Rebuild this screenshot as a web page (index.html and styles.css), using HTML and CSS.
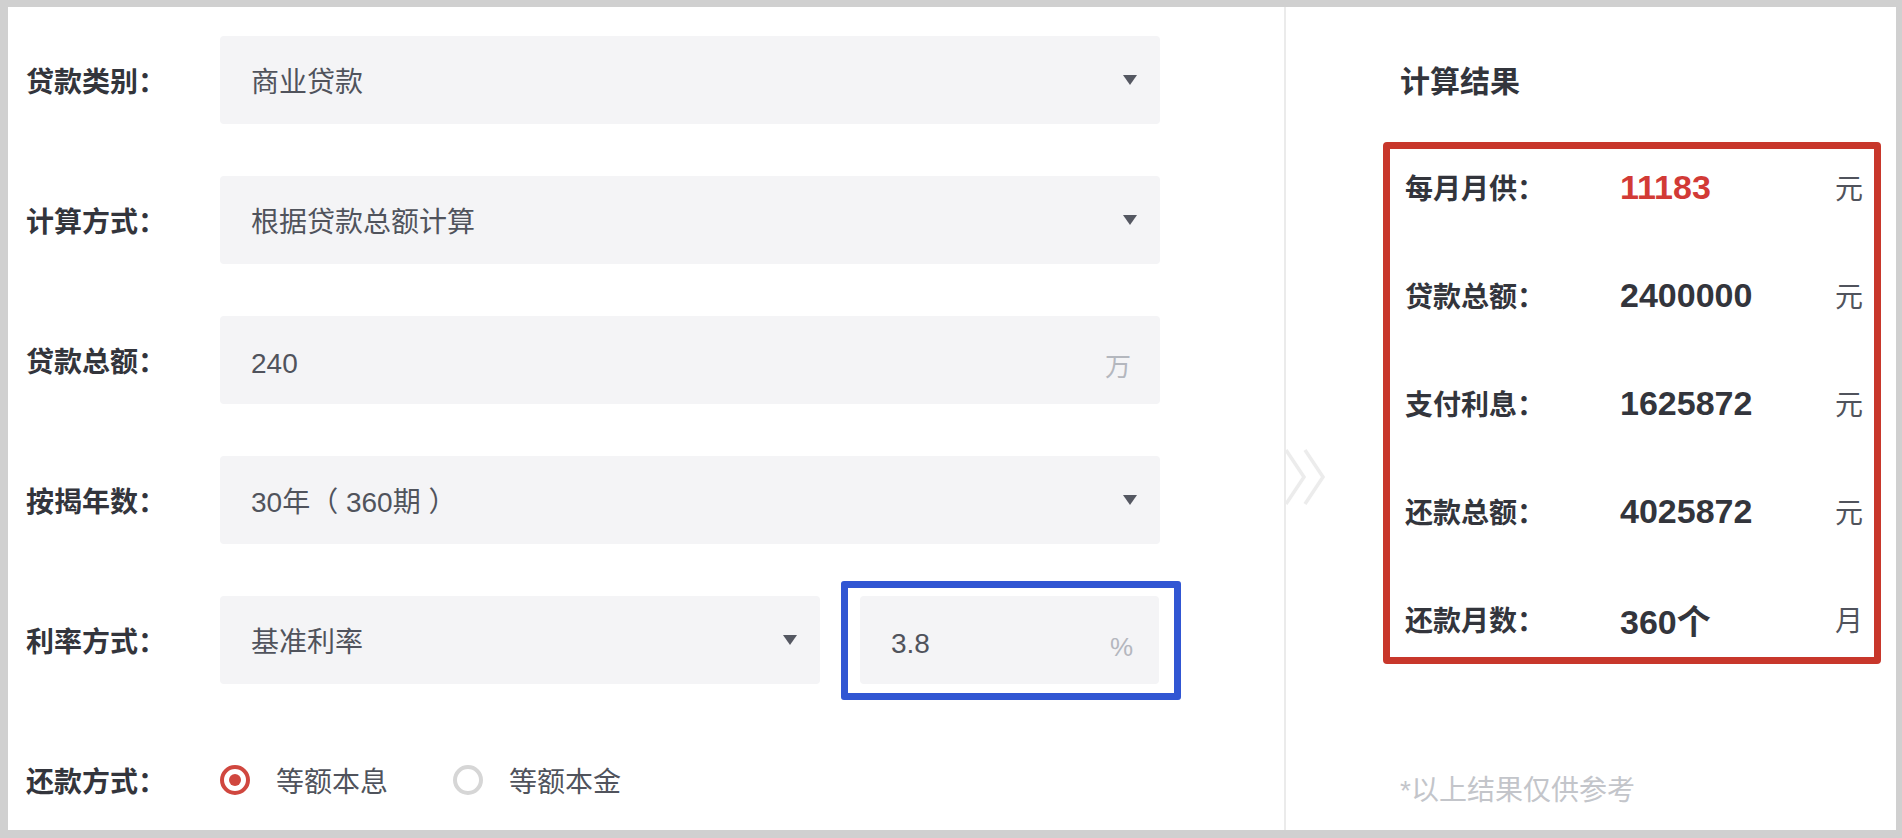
FILE: index.html
```html
<!DOCTYPE html>
<html lang="zh-CN">
<head>
    <meta charset="UTF-8">
    <meta name="viewport" content="width=device-width, initial-scale=1.0">
    <title>房贷计算器</title>
    <link rel="stylesheet" href="styles.css">
</head>
<body>
    <div class="calculator">
        <div class="form-panel">
            <div class="form-row">
                <label class="form-label">贷款类别：</label>
                <div class="field select-field">
                    <span class="field-value">商业贷款</span>
                    <i class="arrow"></i>
                </div>
            </div>

            <div class="form-row">
                <label class="form-label">计算方式：</label>
                <div class="field select-field">
                    <span class="field-value">根据贷款总额计算</span>
                    <i class="arrow"></i>
                </div>
            </div>

            <div class="form-row">
                <label class="form-label">贷款总额：</label>
                <div class="field input-field">
                    <span class="field-value">240</span>
                    <span class="field-unit">万</span>
                </div>
            </div>

            <div class="form-row">
                <label class="form-label">按揭年数：</label>
                <div class="field select-field">
                    <span class="field-value">30年（ 360期 ）</span>
                    <i class="arrow"></i>
                </div>
            </div>

            <div class="form-row">
                <label class="form-label">利率方式：</label>
                <div class="field select-field field-short">
                    <span class="field-value">基准利率</span>
                    <i class="arrow"></i>
                </div>
                <div class="rate-wrap">
                    <div class="field input-field">
                        <span class="field-value">3.8</span>
                        <span class="field-unit">%</span>
                    </div>
                    <div class="mark-blue"></div>
                </div>
            </div>

            <div class="form-row">
                <label class="form-label">还款方式：</label>
                <div class="radio-group">
                    <span class="radio checked"></span>
                    <span class="radio-text">等额本息</span>
                    <span class="radio"></span>
                    <span class="radio-text">等额本金</span>
                </div>
            </div>
        </div>

        <div class="result-panel">
            <svg class="chevron" width="44" height="58" viewBox="0 0 44 58">
                <polyline points="2,2 20,29 2,56" />
                <polyline points="21,2 39,29 21,56" />
            </svg>

            <h3 class="result-title">计算结果</h3>

            <div class="result-list">
                <div class="result-row">
                    <span class="result-label">每月月供：</span>
                    <span class="result-value red">11183</span>
                    <span class="result-unit">元</span>
                </div>
                <div class="result-row">
                    <span class="result-label">贷款总额：</span>
                    <span class="result-value">2400000</span>
                    <span class="result-unit">元</span>
                </div>
                <div class="result-row">
                    <span class="result-label">支付利息：</span>
                    <span class="result-value">1625872</span>
                    <span class="result-unit">元</span>
                </div>
                <div class="result-row">
                    <span class="result-label">还款总额：</span>
                    <span class="result-value">4025872</span>
                    <span class="result-unit">元</span>
                </div>
                <div class="result-row">
                    <span class="result-label">还款月数：</span>
                    <span class="result-value">360个</span>
                    <span class="result-unit">月</span>
                </div>
            </div>

            <p class="result-note">*以上结果仅供参考</p>
        </div>
    </div>
</body>
</html>
```

FILE: styles.css
```css
* {
    margin: 0;
    padding: 0;
    box-sizing: border-box;
}

body {
    font-family: 'Liberation Sans', 'Noto Sans CJK SC', sans-serif;
    background: #d0d0d0;
    color: #50535c;
    height: 100vh;
    padding: 7px 6px 8px 8px;
}

.calculator {
    display: flex;
    height: 100%;
    background: #fff;
}

/* left: form */
.form-panel {
    width: 1276px;
    padding: 29px 0 0 18px;
    display: flex;
    flex-direction: column;
    gap: 52px;
}

.form-row {
    display: flex;
    align-items: center;
    height: 88px;
}

.form-label {
    width: 194px;
    flex-shrink: 0;
    font-size: 28px;
    font-weight: bold;
    color: #33353c;
}

.field {
    width: 940px;
    height: 88px;
    background: #f4f4f6;
    border-radius: 4px;
    display: flex;
    align-items: center;
    justify-content: space-between;
    padding: 0 23px 0 31px;
    font-size: 28px;
    color: #50535c;
    white-space: pre;
}

.field-short {
    width: 600px;
}

.arrow {
    width: 0;
    height: 0;
    border-left: 7px solid transparent;
    border-right: 7px solid transparent;
    border-top: 10px solid #555862;
}

.input-field {
    align-items: baseline;
    padding-top: 4px;
    padding-right: 29px;
}

.input-field .field-value {
    line-height: 88px;
}

.field-unit {
    font-size: 26px;
    color: #b4b7be;
    transform: translateY(3px);
}

.rate-wrap {
    position: relative;
    margin-left: 40px;
}

.rate-wrap .field {
    width: 299px;
    padding-right: 26px;
}

/* annotation frame round the rate input */
.mark-blue {
    position: absolute;
    top: -15px;
    left: -19px;
    right: -22px;
    bottom: -16px;
    border: 7px solid #3156d3;
    border-radius: 3px;
}

.radio-group {
    display: flex;
    align-items: center;
    font-size: 28px;
    color: #50535c;
}

.radio {
    width: 30px;
    height: 30px;
    border-radius: 50%;
    border: 4px solid #d6d6d6;
    display: flex;
    align-items: center;
    justify-content: center;
    margin-right: 26px;
}

.radio.checked {
    border-color: #d0473f;
}

.radio.checked::after {
    content: '';
    width: 12px;
    height: 12px;
    border-radius: 50%;
    background: #d0473f;
}

.radio-text {
    margin-right: 65px;
}

/* right: result */
.result-panel {
    flex: 1;
    position: relative;
    border-left: 2px solid #ebebeb;
    padding: 55px 15px 0 97px;
}

.chevron {
    position: absolute;
    left: -2px;
    top: 441px;
    fill: none;
    stroke: #ececec;
    stroke-width: 3.5;
}

.result-title {
    margin-left: 17px;
    font-size: 30px;
    line-height: 40px;
    font-weight: bold;
    color: #33353c;
    margin-bottom: 40px;
}

.result-list {
    border: 7px solid #c8372b;
    border-radius: 4px;
    padding: 0 11px 0 15px;
    display: flex;
    flex-direction: column;
    gap: 32px;
}

.result-row {
    display: grid;
    grid-template-columns: 215px 1fr auto;
    align-items: center;
    height: 76px;
}

.result-label {
    font-size: 28px;
    font-weight: bold;
    color: #33353c;
}

.result-value {
    font-size: 34px;
    font-weight: bold;
    color: #33353c;
}

.result-value.red {
    color: #d23a36;
}

.result-unit {
    font-size: 28px;
    color: #50535c;
}

.result-note {
    margin: 107px 0 0 17px;
    font-size: 28px;
    line-height: 40px;
    color: #c3c5ca;
}
```
